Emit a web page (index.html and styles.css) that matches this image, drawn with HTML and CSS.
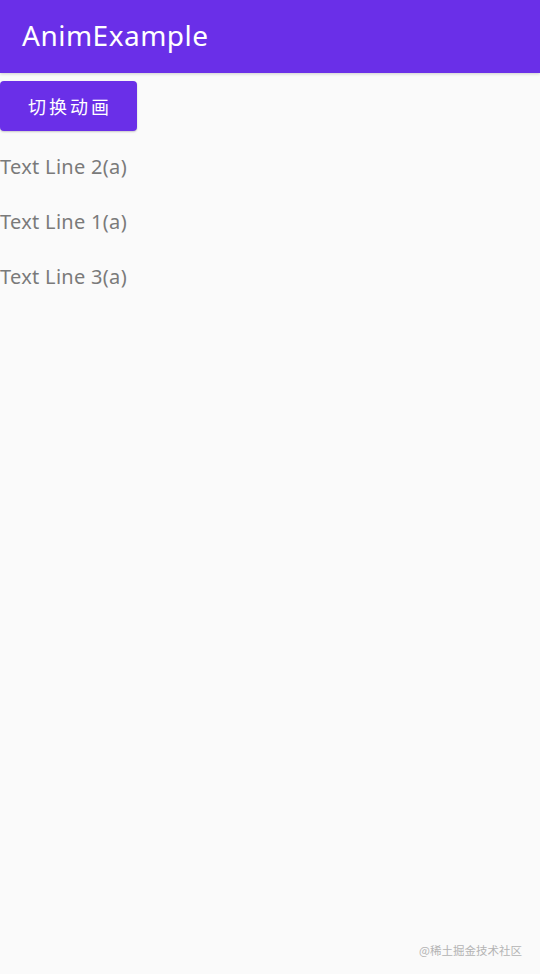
FILE: index.html
```html
<!DOCTYPE html>
<html>
<head>
<meta charset="utf-8">
<link rel="stylesheet" href="styles.css">
</head>
<body>
<div class="app">
  <header class="appbar"><span class="title">AnimExample</span></header>
  <main class="content">
    <button class="btn">切换动画</button>
    <div class="line">Text Line 2(a)</div>
    <div class="line">Text Line 1(a)</div>
    <div class="line">Text Line 3(a)</div>
  </main>
  <div class="watermark">@稀土掘金技术社区</div>
</div>
</body>
</html>
```
FILE: styles.css
```css
html, body {
  margin: 0;
  padding: 0;
  background: #fafafa;
}
.app {
  width: 540px;
  height: 974px;
  display: flex;
  flex-direction: column;
  position: relative;
  font-family: "Open Sans", "Noto Sans", "Noto Sans CJK SC", sans-serif;
}
.appbar {
  height: 73px;
  background: #6a2fe8;
  display: flex;
  align-items: center;
  padding-left: 22px;
  box-shadow: 0 1px 3px rgba(0,0,0,0.18);
}
.title {
  color: #ffffff;
  font-size: 28px;
  font-family: "Noto Sans", "Open Sans", sans-serif;
  letter-spacing: 0.5px;
  margin-top: -4px;
}
.content {
  display: flex;
  flex-direction: column;
  align-items: flex-start;
  padding-top: 8px;
}
.btn {
  width: 137px;
  height: 50px;
  border: none;
  border-radius: 4px;
  background: #6a2fe8;
  color: #ffffff;
  font-family: "Noto Sans CJK SC", sans-serif;
  font-size: 18px;
  letter-spacing: 3px;
  text-indent: 3px;
  padding: 0;
  margin-bottom: 22px;
  box-shadow: 0 1px 2px rgba(0,0,0,0.2);
}
.line {
  height: 55px;
  line-height: 28px;
  color: #7a7a7a;
  font-size: 20px;
  letter-spacing: 0.3px;
  font-family: "Noto Sans", sans-serif;
}
.watermark {
  position: absolute;
  right: 18px;
  bottom: 16px;
  font-size: 11.5px;
  color: #b4b4b4;
  font-family: "Noto Sans CJK SC", sans-serif;
}
```
